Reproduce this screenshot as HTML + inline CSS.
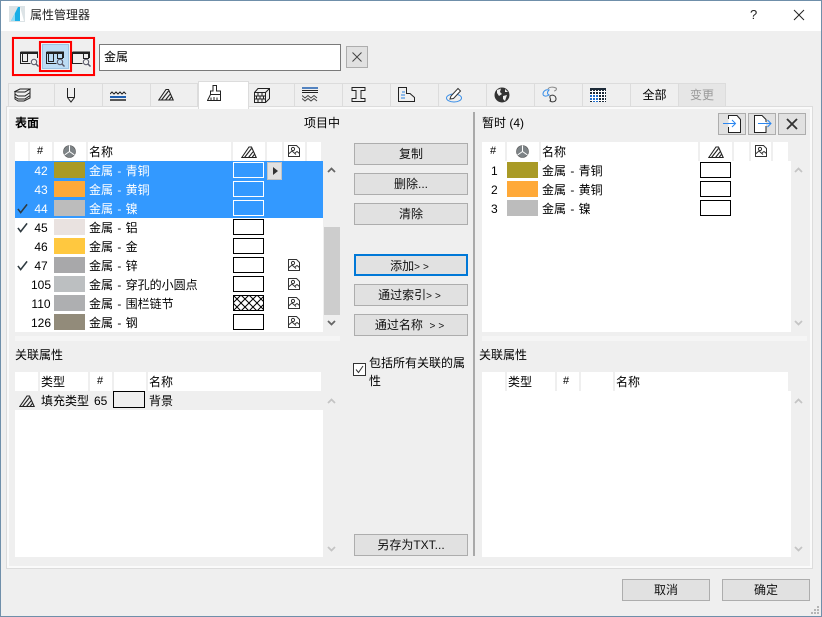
<!DOCTYPE html>
<html lang="zh"><head><meta charset="utf-8"><title>属性管理器</title>
<style>
*{box-sizing:border-box}
html,body{margin:0;padding:0;background:#efefef}
#w{position:relative;width:822px;height:617px;overflow:hidden;background:#efefef;font:12px/19px "Liberation Sans","Noto Sans CJK SC",sans-serif;color:#000}
#w div,#w svg{position:absolute}
.t{white-space:nowrap}
.r{word-spacing:1px}
.b{background:#e1e1e1;border:1px solid #adadad;text-align:center;height:22px;line-height:21px;color:#111;white-space:nowrap}
.g{font-size:10px;letter-spacing:3px}
.tab{top:83px;height:23px;border:1px solid #dcdcdc;border-left:0;border-bottom:0;background:#efefef}
.wh{background:#fff}
.sep{width:2px;height:19px;background:#efefef;top:0}
.n{text-align:center;width:26px;white-space:nowrap}
.sw{width:31px;height:16px}
.fl{width:31px;height:16px;border:1px solid #000;background:#fff}
.sel{color:#fff}
.sel .fl{background:#3399ff;border-color:#fff}
</style></head><body><div id="w">
<svg width="0" height="0" style="position:absolute">
<defs>
<symbol id="fill" viewBox="0 0 16 12"><path d="M.8 11.500L8 1H10.500L15.200 11.500ZM3.500 11.500L10.500 2.500M7.500 11.500L12 5.800M11 11.500L13.300 8.500" fill="none" stroke="#222" stroke-width="1.100"/></symbol>
<symbol id="img" viewBox="0 0 12 12"><path d="M.5.5H8.500L11.500 3.500V11.500H.5ZM.5 9L4 6L8 9.500M7 8L9 6.500L11.500 8.500" fill="none" stroke="#333" stroke-width="1"/><circle cx="5" cy="4" r="1.600" fill="none" stroke="#333"/></symbol>
<symbol id="pie" viewBox="0 0 13 13"><circle cx="6.500" cy="6.500" r="6" fill="#7d8386" stroke="#555" stroke-width=".6"/><path d="M6.500 6.500V.5M6.500 6.500L1.500 10M6.500 6.500L11.500 10" stroke="#fff" stroke-width="1"/></symbol>
<symbol id="up" viewBox="0 0 9 6"><path d="M1 5L4.500 1.500L8 5" fill="none" stroke="currentColor" stroke-width="1.800"/></symbol>
<symbol id="dn" viewBox="0 0 9 6"><path d="M1 1L4.500 4.500L8 1" fill="none" stroke="currentColor" stroke-width="1.800"/></symbol>
<symbol id="chk" viewBox="0 0 12 11"><path d="M1 6L4 10L11 1" fill="none" stroke="#2f3a40" stroke-width="1.700"/></symbol>
<symbol id="wnd" viewBox="0 0 19 16"><path d="M.5 1H17.500V7M.5 1V12.500H10.500" fill="none" stroke="#222"/><path d="M.5.5H17.500V3H.5Z" fill="#222"/><circle cx="14" cy="11" r="2.700" fill="none" stroke="#556"/><path d="M16 13L18.500 15.500" stroke="#556" stroke-width="1.400"/></symbol>
</defs></svg>

<!-- window frame -->
<div style="left:0;top:0;width:822px;height:617px;border:1px solid #6f8faa;z-index:9;pointer-events:none"></div>
<div class="wh" style="left:1px;top:1px;width:820px;height:30px"></div>
<svg style="left:9px;top:6px" width="16" height="16" viewBox="0 0 16 16"><rect width="16" height="16" fill="#dce3e6"/><path d="M2 15L9 1H11V15Z" fill="#19aee6"/><path d="M11 1L15 15H11Z" fill="#fff"/><path d="M2 15L6 7V15Z" fill="#8fdcf5"/></svg>
<div class="t" style="left:30px;top:6px;color:#222">属性管理器</div>
<div class="t" style="left:750px;top:5px;font-size:13px;color:#222">?</div>
<svg style="left:793px;top:9px" width="12" height="12"><path d="M1 1L11 11M11 1L1 11" stroke="#222" stroke-width="1"/></svg>

<!-- red view selector -->
<div style="left:12px;top:37px;width:83px;height:39px;border:2px solid #f00;box-shadow:0 0 1px #f99"></div>
<div style="left:42px;top:44px;width:27px;height:25px;background:#bcdcf4;border:1px solid #9cc4e4"></div>
<div style="left:39px;top:41px;width:33px;height:31px;border:2px solid #f00;box-shadow:0 0 1px #f99"></div>
<svg style="left:20px;top:51px" width="19" height="16"><use href="#wnd"/></svg>
<div style="left:22px;top:53px;width:6px;height:9px;border:1px solid #222"></div>
<svg style="left:46px;top:51px" width="19" height="16"><use href="#wnd"/></svg>
<div style="left:48px;top:53px;width:6px;height:9px;border:1px solid #222"></div>
<div style="left:57px;top:53px;width:6px;height:6px;border:1px solid #222"></div>
<svg style="left:72px;top:51px" width="19" height="16"><use href="#wnd"/></svg>
<div style="left:83px;top:53px;width:6px;height:6px;border:1px solid #222"></div>

<!-- search -->
<div class="wh" style="left:99px;top:44px;width:242px;height:27px;border:1px solid #7a7a7a;padding:3px 4px;line-height:19px">金属</div>
<div class="b" style="left:346px;top:46px;width:22px;height:22px"></div>
<svg style="left:352px;top:52px" width="10" height="10"><path d="M.5.5L9.500 9.500M9.500.5L.5 9.500" stroke="#444"/></svg>

<!-- panel -->
<div style="left:6px;top:106px;width:807px;height:463px;border:3px solid #fafafa;outline:1px solid #dcdcdc;outline-offset:-1px;background:#efefef"></div>

<!-- tabs -->
<div class="tab" style="left:8px;width:47px;border-left:1px solid #dcdcdc"></div>
<div class="tab" style="left:55px;width:48px"></div>
<div class="tab" style="left:103px;width:48px"></div>
<div class="tab" style="left:151px;width:47px"></div>
<div class="tab" style="left:249px;width:46px"></div>
<div class="tab" style="left:295px;width:48px"></div>
<div class="tab" style="left:343px;width:48px"></div>
<div class="tab" style="left:391px;width:48px"></div>
<div class="tab" style="left:439px;width:48px"></div>
<div class="tab" style="left:487px;width:48px"></div>
<div class="tab" style="left:535px;width:48px"></div>
<div class="tab" style="left:583px;width:48px"></div>
<div class="tab t" style="left:631px;width:48px;text-align:center;line-height:22px">全部</div>
<div class="tab t" style="left:679px;width:47px;text-align:center;line-height:22px;color:#9a9a9a;background:#e6e6e6">变更</div>
<div class="wh" style="left:198px;top:81px;width:51px;height:28px;border:1px solid #dcdcdc;border-bottom:0"></div>

<svg style="left:14px;top:88px" width="17" height="14" fill="none" stroke="#222"><path d="M1 3.500L6 1H16L11 4H4ZM1 3.500V6L4 8H11L16 4.500V1M1 6V9L4 11H11L16 7.500V4.500M1 9V11L4 13H10L16 10V7.500"/></svg>
<svg style="left:65px;top:88px" width="12" height="15" fill="none" stroke="#222"><path d="M2.500 0V9.500L6 14L9.500 9.500V0M2.500 9.500H9.500"/></svg>
<svg style="left:110px;top:91px" width="17" height="11" fill="none"><path d="M0 3L2 1L4 3L6 1L8 3L10 1L12 3L14 1L16 3" stroke="#222"/><path d="M0 6H16" stroke="#1f5fb0" stroke-width="2"/><path d="M0 9H16" stroke="#222" stroke-width="1.500"/></svg>
<svg style="left:158px;top:88px" width="16" height="13"><use href="#fill"/></svg>
<svg style="left:207px;top:85px" width="16" height="17" fill="none" stroke="#222"><path d="M6 .5H9.500V6H13.500V9.500H3.500V6H6ZM3.500 9.500L.5 15.500H13.500L13.500 9.500M4 15V12.500M7 15V12M10 15V12.500"/></svg>
<svg style="left:254px;top:88px" width="16" height="15" fill="none" stroke="#222"><path d="M.5 4.500H11.500V14.500H.5ZM.5 4.500L4 .5H15.500V10.500L11.500 14.500M11.500 4.500L15.500 .5M.5 8H11.500M.5 11H11.500M4 4.500V8M8 4.500V8M2.500 8V11M6 8V11M9.500 8V11M4 11V14.500M8 11V14.500"/></svg>
<svg style="left:302px;top:87px" width="16" height="15" fill="none"><path d="M0 1H16" stroke="#1f5fb0" stroke-width="1.500"/><path d="M0 3.500H16" stroke="#222"/><path d="M0 5.500H16" stroke="#222"/><path d="M0 8.500L3 11L6 8.500L9 11L12 8.500L15 11M0 11.500L3 14L6 11.500L9 14L12 11.500L15 14" stroke="#444"/></svg>
<svg style="left:351px;top:87px" width="15" height="15" fill="none" stroke="#222"><path d="M1 .5H14V3.500H10V11.500H14V14.500H1V11.500H5V3.500H1Z"/></svg>
<svg style="left:398px;top:87px" width="17" height="15" fill="none"><path d="M.5.500H8.500V6.500H12L16.500 10.500V14.500H.5Z" stroke="#222"/><path d="M4 5H7M3 8H7M3 11H7" stroke="#2a80e0"/></svg>
<svg style="left:446px;top:87px" width="17" height="16" fill="none"><ellipse cx="8" cy="11" rx="7.500" ry="4" stroke="#3a8fe8"/><path d="M4 12L5 9L12 1.500L14.500 4L7.500 11.500Z" fill="#fff" stroke="#333"/></svg>
<svg style="left:494px;top:87px" width="16" height="16"><circle cx="8" cy="8" r="7.500" fill="#333"/><path d="M3 3L7 1.500L6 5L8 7L5 9L3 6ZM9 9L13 8L11 14L9 12ZM11 2L14 5L11 5Z" fill="#eee"/></svg>
<svg style="left:542px;top:86px" width="16" height="17" fill="none"><path d="M7 4C3 3 1 6 1 8C1 10 4 11 7 9C5 8 5 6 7 4Z" stroke="#3a8fe8"/><path d="M6 3C7 1 11 .5 14 2C15 3 14 5 12 5" stroke="#888"/><path d="M8 10C11 8 14 10 14 13C14 16 10 16.500 8 15C10 14 7 12 8 10Z" stroke="#333"/></svg>
<svg style="left:590px;top:88px" width="16" height="14"><rect width="16" height="14" fill="#1c2a38"/><path d="M0 3.500H16M0 6.500H16M0 9.500H16M0 12.500H16M2.500 2V14M5.500 2V14M8.500 2V14M11.500 2V14M14.500 2V14" stroke="#fff" stroke-width="1" fill="none"/><rect x="0" y="7" width="2" height="2" fill="#1f6fd0"/><rect x="3" y="7" width="2" height="2" fill="#1f6fd0"/><rect x="6" y="7" width="2" height="2" fill="#1f6fd0"/><rect x="0" y="10" width="2" height="2" fill="#1f6fd0"/><rect x="3" y="10" width="2" height="2" fill="#1f6fd0"/><rect x="6" y="10" width="2" height="2" fill="#1f6fd0"/><rect x="3" y="13" width="2" height="1" fill="#1f6fd0"/><rect x="6" y="13" width="2" height="1" fill="#1f6fd0"/></svg>

<!-- left header -->
<div class="t" style="left:15px;top:114px;font-weight:bold">表面</div>
<div class="t" style="left:304px;top:114px">项目中</div>

<!-- left list -->
<div class="wh" style="left:15px;top:142px;width:306px;height:19px">
  <div class="sep" style="left:13px"></div><div class="sep" style="left:37px"></div><div class="sep" style="left:71px"></div><div class="sep" style="left:216px"></div><div class="sep" style="left:250px"></div><div class="sep" style="left:267px"></div><div class="sep" style="left:290px"></div>
  <div class="t" style="left:22px;top:0;font-size:11px">#</div>
  <div class="t" style="left:74px;top:1px">名称</div>
</div>
<svg style="left:63px;top:145px" width="13" height="13"><use href="#pie"/></svg>
<svg style="left:241px;top:146px" width="16" height="12"><use href="#fill"/></svg>
<svg style="left:288px;top:145px" width="12" height="12"><use href="#img"/></svg>

<div class="wh" style="left:15px;top:161px;width:308px;height:171px"></div>
<div style="left:15px;top:161px;width:308px;height:57px;background:#3399ff"></div>

<div class="sel" style="left:15px;top:161px;width:308px;height:19px">
 <div class="n t" style="left:13px;top:1px">42</div><div class="sw" style="left:39px;top:1px;background:#a99a26"></div><div class="t r" style="left:74px;top:1px">金属 - 青铜</div><div class="fl" style="left:218px;top:1px"></div></div>
<div class="sel" style="left:15px;top:180px;width:308px;height:19px">
 <div class="n t" style="left:13px;top:1px">43</div><div class="sw" style="left:39px;top:1px;background:#ffa938"></div><div class="t r" style="left:74px;top:1px">金属 - 黄铜</div><div class="fl" style="left:218px;top:1px"></div></div>
<div class="sel" style="left:15px;top:199px;width:308px;height:19px">
 <div class="n t" style="left:13px;top:1px">44</div><div class="sw" style="left:39px;top:1px;background:#bcbcbc"></div><div class="t r" style="left:74px;top:1px">金属 - 镍</div><div class="fl" style="left:218px;top:1px"></div></div>
<div style="left:15px;top:218px;width:308px;height:19px">
 <div class="n t" style="left:13px;top:1px">45</div><div class="sw" style="left:39px;top:1px;background:#e9e2e0"></div><div class="t r" style="left:74px;top:1px">金属 - 铝</div><div class="fl" style="left:218px;top:1px"></div></div>
<div style="left:15px;top:237px;width:308px;height:19px">
 <div class="n t" style="left:13px;top:1px">46</div><div class="sw" style="left:39px;top:1px;background:#ffc83f"></div><div class="t r" style="left:74px;top:1px">金属 - 金</div><div class="fl" style="left:218px;top:1px"></div></div>
<div style="left:15px;top:256px;width:308px;height:19px">
 <div class="n t" style="left:13px;top:1px">47</div><div class="sw" style="left:39px;top:1px;background:#a8a8aa"></div><div class="t r" style="left:74px;top:1px">金属 - 锌</div><div class="fl" style="left:218px;top:1px"></div></div>
<div style="left:15px;top:275px;width:308px;height:19px">
 <div class="n t" style="left:13px;top:1px">105</div><div class="sw" style="left:39px;top:1px;background:#bcbfc1"></div><div class="t r" style="left:74px;top:1px">金属 - 穿孔的小圆点</div><div class="fl" style="left:218px;top:1px"></div></div>
<div style="left:15px;top:294px;width:308px;height:19px">
 <div class="n t" style="left:13px;top:1px">110</div><div class="sw" style="left:39px;top:1px;background:#aeafb1"></div><div class="t r" style="left:74px;top:1px">金属 - 围栏链节</div>
 <svg style="left:218px;top:1px" width="31" height="16"><defs><pattern id="x" width="8" height="8" patternUnits="userSpaceOnUse"><path d="M0 0L8 8M8 0L0 8" stroke="#000" stroke-width="1"/></pattern></defs><rect x=".5" y=".5" width="30" height="15" fill="url(#x)" stroke="#000"/></svg></div>
<div style="left:15px;top:313px;width:308px;height:19px">
 <div class="n t" style="left:13px;top:1px">126</div><div class="sw" style="left:39px;top:1px;background:#928b7a"></div><div class="t r" style="left:74px;top:1px">金属 - 钢</div><div class="fl" style="left:218px;top:1px"></div></div>

<svg style="left:17px;top:203px" width="11" height="11"><use href="#chk"/></svg>
<svg style="left:17px;top:222px" width="11" height="11"><use href="#chk"/></svg>
<svg style="left:17px;top:260px" width="11" height="11"><use href="#chk"/></svg>
<svg style="left:288px;top:259px" width="12" height="12"><use href="#img"/></svg>
<svg style="left:288px;top:278px" width="12" height="12"><use href="#img"/></svg>
<svg style="left:288px;top:297px" width="12" height="12"><use href="#img"/></svg>
<svg style="left:288px;top:316px" width="12" height="12"><use href="#img"/></svg>
<div style="left:267px;top:162px;width:15px;height:18px;background:#e1e1e1;border:1px solid #c4c4c4"></div>
<div style="left:273px;top:167px;width:0;height:0;border-left:5px solid #333;border-top:4px solid transparent;border-bottom:4px solid transparent"></div>

<svg style="left:327px;top:167px;color:#666" width="9" height="6"><use href="#up"/></svg>
<div style="left:324px;top:227px;width:16px;height:88px;background:#cdcdcd"></div>
<svg style="left:327px;top:320px;color:#666" width="9" height="6"><use href="#dn"/></svg>
<div style="left:15px;top:336px;width:325px;height:5px;background:#f5f5f5"></div>

<!-- left associated -->
<div class="t" style="left:15px;top:346px">关联属性</div>
<div class="wh" style="left:15px;top:372px;width:306px;height:19px">
  <div class="sep" style="left:23px"></div><div class="sep" style="left:73px"></div><div class="sep" style="left:97px"></div><div class="sep" style="left:131px"></div>
  <div class="t" style="left:26px;top:1px">类型</div><div class="t" style="left:82px;top:0;font-size:11px">#</div><div class="t" style="left:134px;top:1px">名称</div>
</div>
<div class="wh" style="left:15px;top:391px;width:308px;height:166px"></div>
<div style="left:15px;top:391px;width:308px;height:19px;background:#efefef"></div>
<svg style="left:19px;top:395px" width="16" height="12"><use href="#fill"/></svg>
<div class="t" style="left:41px;top:392px">填充类型</div>
<div class="t" style="left:94px;top:392px">65</div>
<div style="left:113px;top:391px;width:32px;height:17px;border:1px solid #000;background:#efefef"></div>
<div class="t" style="left:149px;top:392px">背景</div>
<svg style="left:327px;top:398px;color:#c4c4c4" width="9" height="6"><use href="#up"/></svg>
<svg style="left:327px;top:546px;color:#c4c4c4" width="9" height="6"><use href="#dn"/></svg>

<!-- middle buttons -->
<div class="b" style="left:354px;top:143px;width:114px">复制</div>
<div class="b" style="left:354px;top:173px;width:114px">删除...</div>
<div class="b" style="left:354px;top:203px;width:114px">清除</div>
<div class="b" style="left:354px;top:254px;width:114px;border:2px solid #0078d7;line-height:20px">添加<span class="g">&gt;&gt;</span></div>
<div class="b" style="left:354px;top:284px;width:114px">通过索引<span class="g">&gt;&gt;</span></div>
<div class="b" style="left:354px;top:314px;width:114px">通过名称 &nbsp;<span class="g">&gt;&gt;</span></div>
<div style="left:353px;top:363px;width:13px;height:13px;border:1px solid #333;background:#fff"></div>
<svg style="left:355px;top:365px" width="9" height="9" fill="none" stroke="#333"><path d="M1 4.500L3.500 7.500L8 1"/></svg>
<div style="left:369px;top:354px;width:100px;line-height:18px">包括所有关联的属性</div>
<div class="b" style="left:354px;top:534px;width:114px">另存为TXT...</div>

<div style="left:473px;top:112px;width:2px;height:444px;background:#a9a9a9"></div>

<!-- right -->
<div class="t" style="left:482px;top:114px">暂时 (4)</div>
<div class="b" style="left:718px;top:113px;width:28px;height:22px"></div>
<div class="b" style="left:748px;top:113px;width:28px;height:22px"></div>
<div class="b" style="left:778px;top:113px;width:28px;height:22px"></div>
<svg style="left:722px;top:115px" width="22" height="18" fill="none"><path d="M6.500 4V.5H15L18.500 4.500V17.500H6.500V12" fill="#fff" stroke="#222"/><path d="M1 8.500H13M10 5L13.500 8.500L10 12" stroke="#2a86f0"/></svg>
<svg style="left:752px;top:115px" width="22" height="18" fill="none"><path d="M14 7V4.500L10 .5H2.500V17.500H14V11" fill="#fff" stroke="#222"/><path d="M6 8.500H19M15.500 5L19 8.500L15.500 12" stroke="#2a86f0"/></svg>
<svg style="left:786px;top:118px" width="12" height="12"><path d="M1 1L11 11M11 1L1 11" stroke="#333" stroke-width="1.800"/></svg>

<div class="wh" style="left:482px;top:142px;width:306px;height:19px">
  <div class="sep" style="left:23px"></div><div class="sep" style="left:57px"></div><div class="sep" style="left:216px"></div><div class="sep" style="left:250px"></div><div class="sep" style="left:267px"></div><div class="sep" style="left:289px"></div>
  <div class="t" style="left:8px;top:0;font-size:11px">#</div><div class="t" style="left:60px;top:1px">名称</div>
</div>
<svg style="left:516px;top:145px" width="13" height="13"><use href="#pie"/></svg>
<svg style="left:708px;top:146px" width="16" height="12"><use href="#fill"/></svg>
<svg style="left:755px;top:145px" width="12" height="12"><use href="#img"/></svg>
<div class="wh" style="left:482px;top:161px;width:309px;height:171px"></div>
<div class="t" style="left:491px;top:162px">1</div><div class="sw" style="left:507px;top:162px;background:#a99a26"></div><div class="t r" style="left:542px;top:162px">金属 - 青铜</div><div class="fl" style="left:700px;top:162px"></div>
<div class="t" style="left:491px;top:181px">2</div><div class="sw" style="left:507px;top:181px;background:#ffa938"></div><div class="t r" style="left:542px;top:181px">金属 - 黄铜</div><div class="fl" style="left:700px;top:181px"></div>
<div class="t" style="left:491px;top:200px">3</div><div class="sw" style="left:507px;top:200px;background:#bcbcbc"></div><div class="t r" style="left:542px;top:200px">金属 - 镍</div><div class="fl" style="left:700px;top:200px"></div>
<svg style="left:794px;top:167px;color:#c4c4c4" width="9" height="6"><use href="#up"/></svg>
<svg style="left:794px;top:320px;color:#c4c4c4" width="9" height="6"><use href="#dn"/></svg>
<div style="left:482px;top:336px;width:325px;height:5px;background:#f5f5f5"></div>

<div class="t" style="left:479px;top:346px">关联属性</div>
<div class="wh" style="left:482px;top:372px;width:306px;height:19px">
  <div class="sep" style="left:23px"></div><div class="sep" style="left:73px"></div><div class="sep" style="left:97px"></div><div class="sep" style="left:131px"></div>
  <div class="t" style="left:26px;top:1px">类型</div><div class="t" style="left:81px;top:0;font-size:11px">#</div><div class="t" style="left:134px;top:1px">名称</div>
</div>
<div class="wh" style="left:482px;top:391px;width:309px;height:166px"></div>
<svg style="left:794px;top:398px;color:#c4c4c4" width="9" height="6"><use href="#up"/></svg>
<svg style="left:794px;top:546px;color:#c4c4c4" width="9" height="6"><use href="#dn"/></svg>

<!-- footer -->
<div class="b" style="left:622px;top:579px;width:88px">取消</div>
<div class="b" style="left:722px;top:579px;width:88px">确定</div>
<svg style="left:810px;top:605px" width="10" height="10" fill="#b5b5b5"><rect x="7" y="1" width="2" height="2"/><rect x="4" y="4" width="2" height="2"/><rect x="7" y="4" width="2" height="2"/><rect x="1" y="7" width="2" height="2"/><rect x="4" y="7" width="2" height="2"/><rect x="7" y="7" width="2" height="2"/></svg>
</div></body></html>
